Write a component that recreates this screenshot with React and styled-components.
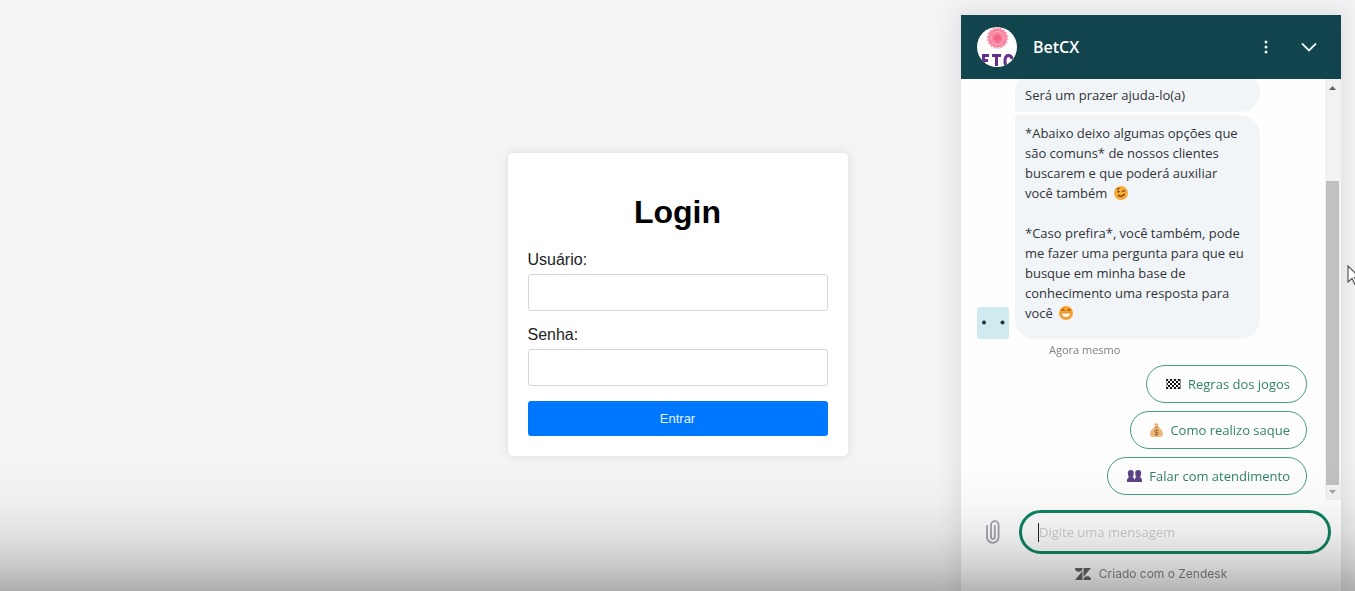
import React from "react";
import styled, { createGlobalStyle } from "styled-components";

const GlobalStyle = createGlobalStyle`
  * { box-sizing: border-box; }
  body {
    margin: 0;
    background: #f4f4f6;
    font-family: "Liberation Sans", Arial, sans-serif;
  }
`;

const Page = styled.main`
  min-height: 100vh;
  display: flex;
  align-items: center;
  justify-content: center;
  padding: 18px 0 0;
`;

const LoginCard = styled.form`
  width: 340px;
  padding: 20px;
  display: flex;
  flex-direction: column;
  background: #fff;
  border-radius: 5px;
  box-shadow: 0 0 10px rgba(0, 0, 0, 0.1);
`;

const Title = styled.h1`
  margin: 20px 0;
  font-size: 32px;
  line-height: 38px;
  text-align: center;
  color: #000;
`;

const Label = styled.label`
  font-size: 16px;
  line-height: 18px;
  color: #222;
`;

const Field = styled.input`
  height: 37px;
  margin: 5px 0 15px;
  padding: 10px;
  border: 1px solid #d6d5d9;
  border-radius: 3px;
  background: #fff;
  font: inherit;
  outline: none;
`;

const Submit = styled.button`
  height: 35px;
  border: 0;
  border-radius: 3px;
  background: #07f;
  color: #e4f2ff;
  font: 13px "Liberation Sans", Arial, sans-serif;
`;

const Chat = styled.aside`
  position: fixed;
  top: 15px;
  right: 14px;
  bottom: 0;
  width: 380px;
  display: flex;
  flex-direction: column;
  background: #fefefe;
  box-shadow: 0 0 20px 4px rgba(36, 30, 46, 0.1);
  font-family: "Open Sans", "Noto Sans", sans-serif;
`;

const ChatHeader = styled.header`
  flex: none;
  height: 64px;
  padding: 0 16px;
  display: flex;
  align-items: center;
  gap: 16px;
  background: #11444d;
  color: #fff;
`;

const ChatName = styled.h2`
  flex: 1;
  margin: 0;
  font-size: 16px;
  line-height: 24px;
  font-weight: 600;
`;

const HeaderButton = styled.button`
  width: 32px;
  height: 32px;
  padding: 0;
  display: grid;
  place-items: center;
  border: 0;
  background: none;
  color: #e8f2f2;
`;

const HeaderActions = styled.div`
  display: flex;
  gap: 11px;
`;

const ChatBody = styled.div`
  flex: 1;
  min-height: 0;
  display: flex;
`;

const Messages = styled.section`
  flex: 1;
  min-width: 0;
  overflow: hidden;
  padding: 0 18px 5px 16px;
  display: flex;
  flex-direction: column;
  justify-content: flex-end;
`;

const MessageRow = styled.div`
  display: flex;
  align-items: flex-end;
  gap: 6px;
`;

const Bubbles = styled.div`
  width: 245px;
  display: flex;
  flex-direction: column;
  gap: 3px;
`;

const Bubble = styled.p`
  margin: 0;
  padding: ${(p) => (p.$first ? "12px 12px 7px 10px" : "8px 12px 16px 10px")};
  border-radius: ${(p) => (p.$first ? "20px 20px 20px 4px" : "4px 20px 20px 20px")};
  background: #f2f5f8;
  color: #303338;
  font-size: 13px;
  line-height: 20px;
`;

const Time = styled.time`
  margin: 3px 0 7px 72px;
  font-size: 11px;
  line-height: 16px;
  color: #7c7f88;
`;

const Replies = styled.div`
  display: flex;
  flex-direction: column;
  align-items: flex-end;
  gap: 8px;
`;

const Reply = styled.button`
  height: 38px;
  padding: 0 16px 0 19px;
  display: flex;
  align-items: center;
  gap: 7px;
  border: 1px solid #459c82;
  border-radius: 19px;
  background: #fefefe;
  color: #31836a;
  font: 13px "Open Sans", "Noto Sans", sans-serif;
`;

const ScrollTrack = styled.div`
  width: 16px;
  padding: 7px 2px 6px 1px;
  display: flex;
  flex-direction: column;
  align-items: center;
  background: #f2f2f2;
`;

const ScrollThumb = styled.div`
  width: 13px;
  margin-bottom: 5px;
  flex: 302;
  background: #c1c1c1;
`;

const ScrollGap = styled.div`
  flex: 91;
`;

const Composer = styled.footer`
  flex: none;
  height: 91px;
  padding: 10px 10px 0 22px;
  display: flex;
  flex-direction: column;
  gap: 12px;
`;

const ComposerRow = styled.div`
  display: flex;
  align-items: center;
  gap: 16px;
`;

const AttachButton = styled.button`
  width: 20px;
  height: 28px;
  padding: 0;
  border: 0;
  background: none;
`;

const InputShell = styled.div`
  flex: 1;
  height: 44px;
  padding: 0 16px;
  display: flex;
  align-items: center;
  border: 3px solid #0e8463;
  border-radius: 22px;
`;

const Caret = styled.span`
  width: 1px;
  height: 19px;
  background: #222;
`;

const MessageInput = styled.input`
  flex: 1;
  min-width: 0;
  padding: 0;
  border: 0;
  outline: none;
  background: none;
  font: 13px "Open Sans", "Noto Sans", sans-serif;
  &::placeholder { color: #cccdd3; opacity: 1; }
`;

const Credit = styled.a`
  display: flex;
  align-items: center;
  justify-content: center;
  gap: 8px;
  margin-right: 12px;
  color: #858585;
  font: 12px/16px "Inter", sans-serif;
  text-decoration: none;
`;

const BottomShade = styled.div`
  position: fixed;
  inset: auto 0 0;
  height: 130px;
  pointer-events: none;
  background: linear-gradient(
    transparent,
    rgba(0, 0, 0, 0.02) 30%,
    rgba(0, 0, 0, 0.07) 55%,
    rgba(0, 0, 0, 0.17) 80%,
    rgba(0, 0, 0, 0.29)
  );
`;

const Pointer = styled.svg`
  position: fixed;
  top: 265px;
  right: -6px;
`;

const Emoji = styled.svg`
  margin-left: ${(p) => (p.$inText ? "3px" : "0")};
  vertical-align: -2px;
`;

const BrandLogo = () => (
  <svg width="40" height="40" viewBox="0 0 40 40" aria-hidden="true">
    <defs>
      <clipPath id="brand"><circle cx="20" cy="20" r="20" /></clipPath>
    </defs>
    <g clipPath="url(#brand)">
      <rect width="40" height="40" fill="#fff" />
      <circle cx="20.500" cy="11" r="9.500" fill="#fb819d" />
      <circle cx="20.500" cy="11" r="10" fill="none" stroke="#fb8fa6" strokeWidth="1.500" strokeDasharray="2 1.500" />
      <circle cx="20.500" cy="11" r="6.500" fill="none" stroke="#fdb5c3" strokeWidth="1" />
      <path d="M20.500 6.500l4 4.500q0 3-3 2.500l1 2h-4l1-2q-3 .5-3-2.500z" fill="#f4638a" />
      <g fill="none" stroke="#62308c" strokeWidth="3">
        <path d="M12 28.500H6.500V41M6 33.500h5M15 28.500h9M19.500 28V39M35 32q-.5-3.500-3.500-3.500T28 33v2q0 4 3.500 4 3 0 3.500-3" />
      </g>
    </g>
  </svg>
);

const BotAvatar = () => (
  <svg width="32" height="32" viewBox="0 0 32 32" aria-hidden="true">
    <rect width="32" height="32" rx="3" fill="#d0ebef" />
    <circle cx="7" cy="15.500" r="2" fill="#17363c" />
    <circle cx="25.500" cy="15.500" r="2" fill="#17363c" />
  </svg>
);

const Wink = () => (
  <Emoji $inText width="14" height="14" viewBox="0 0 14 14" role="img" aria-label="piscadela">
    <circle cx="7" cy="7" r="7" fill="#f8aa36" />
    <circle cx="4.500" cy="5.500" r="1" fill="#60371a" />
    <path d="M8 5.500l3-1M2.500 3l3-.5M4 9q3 3 6.500-1" fill="none" stroke="#60371a" strokeWidth="1.200" />
  </Emoji>
);

const Grin = () => (
  <Emoji $inText width="14" height="14" viewBox="0 0 14 14" role="img" aria-label="sorriso">
    <circle cx="7" cy="7" r="7" fill="#f8a12c" />
    <path d="M2.500 4.500q1.500-2 3 0M8.500 4.500q1.500-2 3 0" fill="none" stroke="#60371a" />
    <path d="M2.500 7h9q0 4.500-4.500 4.500T2.500 7z" fill="#fff4e0" stroke="#c56c1c" strokeWidth=".5" />
  </Emoji>
);

const Flag = () => (
  <Emoji width="15" height="10" viewBox="0 0 15 10" aria-hidden="true">
    <defs>
      <pattern id="checks" width="4" height="4" patternUnits="userSpaceOnUse">
        <rect width="4" height="4" fill="#fff" />
        <path d="M0 0h2v2H0zM2 2h2v2H2z" fill="#111" />
      </pattern>
    </defs>
    <path d="M0 0h15l-1 5 1 5H0l1-5z" fill="url(#checks)" stroke="#333" strokeWidth=".5" />
  </Emoji>
);

const MoneyBag = () => (
  <Emoji width="13" height="14" viewBox="0 0 13 14" aria-hidden="true">
    <path d="M4.500 1l2-1 2 1-.5 3q5 3 5 7 0 3-3 3H3q-3 0-3-3 0-4 5-7z" fill="#efb878" />
    <path d="M4.500 4.300h4" stroke="#b5803f" />
    <path d="M8.500 7.500q-4-1-4 .7t2 1.300 2 1.300-4 .7M6.500 6v7" fill="none" stroke="#9a6a32" strokeWidth=".9" />
  </Emoji>
);

const People = () => (
  <Emoji width="15" height="12" viewBox="0 0 15 12" aria-hidden="true">
    <g fill="#5b4588">
      <path d="M.8 3q0-3 3-3t3 3q0 3-1.300 4 2 .5 2 5H0q0-4.500 2.300-5Q.8 6 .8 3z" />
      <path d="M8.200 3q0-3 3-3t3 3q0 3-1.500 4 2.300.5 2.300 5H7.500q0-4.500 2-5-1.300-1-1.300-4z" />
      <path d="M0 9.500h15V12H0z" />
    </g>
  </Emoji>
);

const ScrollArrow = ({ down }) => (
  <svg width="7" height="4" viewBox="0 0 7 4" aria-hidden="true">
    <path d={down ? "M0 0h7L3.500 4z" : "M0 4h7L3.500 0z"} fill={down ? "#a3a3a3" : "#606060"} />
  </svg>
);

const replies = [
  { text: "Regras dos jogos", Icon: Flag },
  { text: "Como realizo saque", Icon: MoneyBag },
  { text: "Falar com atendimento", Icon: People },
];

export default function App() {
  return (
    <>
      <GlobalStyle />
      <Page>
        <LoginCard onSubmit={(e) => e.preventDefault()}>
          <Title>Login</Title>
          <Label htmlFor="user">Usuário:</Label>
          <Field id="user" type="text" />
          <Label htmlFor="password">Senha:</Label>
          <Field id="password" type="password" />
          <Submit type="submit">Entrar</Submit>
        </LoginCard>
      </Page>
      <Chat>
        <ChatHeader>
          <BrandLogo />
          <ChatName>BetCX</ChatName>
          <HeaderActions>
            <HeaderButton type="button" aria-label="Mais opções">
              <svg width="16" height="16" viewBox="0 0 16 16" fill="currentColor">
                <circle cx="8" cy="3" r="1.500" />
                <circle cx="8" cy="8" r="1.500" />
                <circle cx="8" cy="13" r="1.500" />
              </svg>
            </HeaderButton>
            <HeaderButton type="button" aria-label="Minimizar">
              <svg width="16" height="16" viewBox="0 0 16 16" fill="none" stroke="currentColor" strokeWidth="1.800">
                <path d="M1.500 5l6.500 6.500L14.500 5" strokeLinecap="round" />
              </svg>
            </HeaderButton>
          </HeaderActions>
        </ChatHeader>
        <ChatBody>
          <Messages>
            <MessageRow>
              <BotAvatar />
              <Bubbles>
                <Bubble $first>Será um prazer ajuda-lo(a)</Bubble>
                <Bubble>
                  *Abaixo deixo algumas opções que são comuns* de nossos clientes buscarem e que poderá auxiliar você também <Wink />
                  <br />
                  <br />
                  *Caso prefira*, você também, pode me fazer uma pergunta para que eu busque em minha base de conhecimento uma resposta para você <Grin />
                </Bubble>
              </Bubbles>
            </MessageRow>
            <Time>Agora mesmo</Time>
            <Replies>
              {replies.map(({ text, Icon }) => (
                <Reply type="button" key={text}>
                  <Icon />
                  {text}
                </Reply>
              ))}
            </Replies>
          </Messages>
          <ScrollTrack>
            <ScrollArrow />
            <ScrollGap />
            <ScrollThumb />
            <ScrollArrow down />
          </ScrollTrack>
        </ChatBody>
        <Composer>
          <ComposerRow>
            <AttachButton type="button" aria-label="Anexar arquivo">
              <svg width="20" height="28" viewBox="0 0 20 28" fill="none" stroke="#a0a3aa" strokeWidth="1.800" strokeLinecap="round">
                <path d="M4 8v11a5.800 5.800 0 0 0 11.600 0V7a3.800 3.800 0 0 0-7.600 0v12a1.900 1.900 0 0 0 3.800 0V8" />
              </svg>
            </AttachButton>
            <InputShell>
              <Caret />
              <MessageInput aria-label="Mensagem" placeholder="Digite uma mensagem" />
            </InputShell>
          </ComposerRow>
          <Credit href="#zendesk">
            <svg width="16" height="12" viewBox="0 0 16 12" fill="#666" aria-hidden="true">
              <path d="M0 0h7.500a3.750 3.750 0 0 1-7.500 0zM7.500 3v9H0zM8.500 9V0H16zM8.500 12a3.750 3.750 0 0 1 7.500 0z" />
            </svg>
            Criado com o Zendesk
          </Credit>
        </Composer>
      </Chat>
      <BottomShade />
      <Pointer width="14" height="20" viewBox="0 0 14 20" aria-hidden="true">
        <path d="M1 1v16l4-3.500 3 6 2.500-1-3-6H13z" fill="#fff" stroke="#555" strokeWidth="1.200" />
      </Pointer>
    </>
  );
}
